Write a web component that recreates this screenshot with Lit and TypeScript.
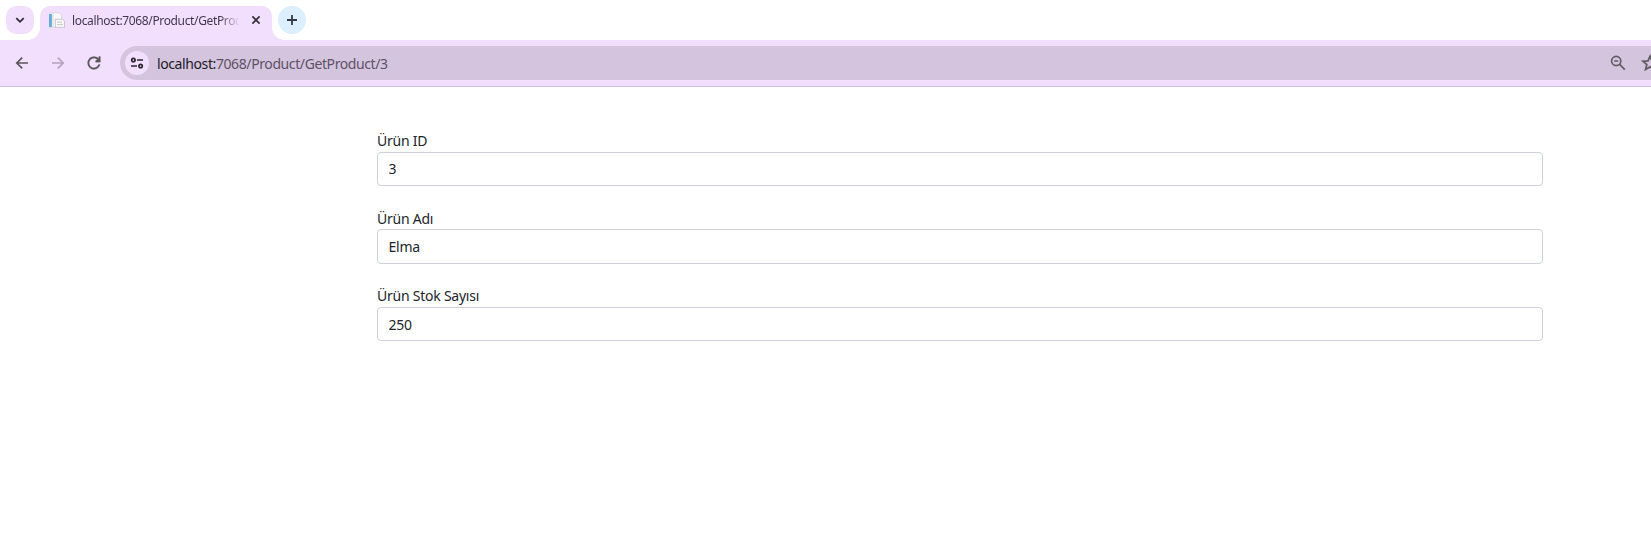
import { LitElement, html, css } from "lit";
import { customElement, property } from "lit/decorators.js";

@customElement("browser-chrome")
class BrowserChrome extends LitElement {
  static styles = css`
    :host { display: block; font-family: "Noto Sans", "Open Sans", sans-serif; }
    svg { display: block; flex: none; }
    .strip { display: flex; height: 40px; box-sizing: border-box; padding: 6px 0 0 6px; background: #fff; }
    .search { width: 28px; height: 28px; border-radius: 10px; background: #f2dffd; display: grid; place-items: center; }
    .tab { position: relative; margin-left: 6px; width: 232px; height: 34px; box-sizing: border-box; padding: 0 10px 6px 9px;
      background: #f2dffd; border-radius: 10px 10px 0 0; display: flex; align-items: center; }
    .tab::before, .tab::after { content: ""; position: absolute; bottom: 0; width: 12px; height: 12px; }
    .tab::before { right: 100%; background: radial-gradient(circle at 0 0, transparent 11.5px, #f2dffd 12px); }
    .tab::after { left: 100%; background: radial-gradient(circle at 100% 0, transparent 11.5px, #f2dffd 12px); }
    .title { margin-left: 7px; width: 168px; overflow: hidden; white-space: nowrap; font-size: 12px; line-height: 18px; padding-top: 2px;
      letter-spacing: -0.36px; color: #44394c; -webkit-mask-image: linear-gradient(90deg, #000 148px, transparent 168px);
      mask-image: linear-gradient(90deg, #000 148px, transparent 168px); }
    .close { margin-left: 11px; }
    .new { margin-left: 6px; width: 28px; height: 28px; border-radius: 50%; background: #dbeffe; display: grid; place-items: center; }
    .toolbar { display: flex; align-items: center; height: 47px; box-sizing: border-box; border-bottom: 1px solid #d0c1da;
      background: #f2dffd; padding: 0 0 0 14px; overflow: hidden; }
    .nav { display: flex; gap: 20px; width: 106px; }
    .bar { flex: 1; min-width: 0; height: 34px; box-sizing: border-box; padding-left: 5px; border-radius: 17px 0 0 17px; background: #d5c4de;
      display: flex; align-items: center; overflow: hidden; }
    .info { width: 24px; height: 24px; border-radius: 50%; background: #f2dffd; display: grid; place-items: center; }
    .url { margin-left: 8px; padding-top: 1px; font-size: 14px; line-height: 20px; letter-spacing: -0.4px; color: #5d5265; white-space: nowrap; }
    .host { color: #201b24; }
    .zoom { margin-left: auto; }
    .star { margin: 0 -8px 0 15px; }
  `;
  render() {
    return html`
      <div class="strip">
        <div class="search"><svg width="12" height="12" viewBox="0 0 12 12" fill="none" stroke="#332b39" stroke-width="1.8"><path d="M2.3 4.2 6 7.8l3.7-3.6"/></svg></div>
        <div class="tab">
          <svg width="16" height="16" viewBox="0 0 16 16"><path fill="#f6f6f7" stroke="#d2d0d5" stroke-width=".7" d="M.4 1h4.2v14.3H.4z"/><path fill="#f8f8f9" stroke="#d2d0d5" stroke-width=".7" d="M4 .8h6.3l2.2 2v12.5H4z"/><path fill="#64add8" d="M0 2h2.9v13H0z"/><path fill="#fafafa" stroke="#bdbdc1" stroke-width=".8" d="M6.4 7.3h7l2.1 1.8v6.3H6.4z"/><path stroke="#c7c7ca" d="M8 10.2h5M8 12.6h6"/></svg>
          <span class="title">localhost:7068/Product/GetProduct/3</span>
          <svg class="close" width="10" height="10" viewBox="0 0 10 10" stroke="#332b39" stroke-width="1.6"><path d="m1.4 1.4 7.2 7.2m0-7.2L1.4 8.6"/></svg>
        </div>
        <div class="new"><svg width="12" height="12" viewBox="0 0 12 12" stroke="#343b42" stroke-width="1.8"><path d="M6 1v10M1 6h10"/></svg></div>
      </div>
      <div class="toolbar">
        <div class="nav">
          <svg width="16" height="16" viewBox="0 0 16 16" fill="none" stroke="#5a565c" stroke-width="1.7"><path d="M14 8H3.2M8.2 2.6 2.8 8l5.4 5.4"/></svg>
          <svg width="16" height="16" viewBox="0 0 16 16" fill="none" stroke="#b3a4bd" stroke-width="1.7"><path d="M2 8h10.8M7.8 2.6 13.2 8l-5.4 5.4"/></svg>
          <svg width="16" height="16" viewBox="2 2 20 20" fill="#5a565c" stroke="#5a565c" stroke-width=".3"><path d="M17.65 6.35C16.2 4.9 14.21 4 12 4c-4.42 0-7.99 3.58-7.99 8s3.57 8 7.99 8c3.73 0 6.84-2.55 7.73-6h-2.08c-.82 2.33-3.04 4-5.65 4-3.31 0-6-2.69-6-6s2.69-6 6-6c1.66 0 3.14.69 4.22 1.78L14 9v2h6V4h-2z"/></svg>
        </div>
        <div class="bar">
          <div class="info"><svg width="14" height="12" viewBox="0 0 14 12" fill="none" stroke="#2c2631" stroke-width="1.7"><circle cx="3.4" cy="3" r="1.7"/><path d="M7 3h6M1 9h6"/><circle cx="10.6" cy="9" r="1.7"/></svg></div>
          <span class="url"><span class="host">localhost:</span>7068/Product/GetProduct/3</span>
          <svg class="zoom" width="16" height="16" viewBox="0 0 16 16" fill="none" stroke="#625d65" stroke-width="1.7"><circle cx="6.2" cy="6" r="4.6"/><path d="m9.4 9.2 5.4 5.4M4.2 6h4"/></svg>
          <svg class="star" width="18" height="18" viewBox="0 0 18 18" fill="none" stroke="#625d65" stroke-width="1.8"><path d="m9 2.3 2 4.6 5 .4-3.8 3.3 1.2 4.9L9 12.9l-4.4 2.6 1.2-4.9L2 7.3l5-.4z"/></svg>
        </div>
      </div>`;
  }
}

@customElement("product-field")
class ProductField extends LitElement {
  @property() label = "";
  @property() value = "";
  static styles = css`
    :host { display: block; font: 14px/22px "Noto Sans", "Open Sans", sans-serif; letter-spacing: -0.24px; color: #212529; }
    .label { display: block; height: 22px; box-sizing: border-box; padding-top: 0.5px; }
    .control { display: block; width: 100%; height: 34.4px; box-sizing: border-box; border: 1px solid #ced1d8; border-radius: 4px;
      padding: 0 10.5px; font: inherit; letter-spacing: inherit; color: inherit; background: #fff; outline: none; }
  `;
  render() {
    return html`<label><span class="label">${this.label}</span><input class="control" readonly .value=${this.value} /></label>`;
  }
}

@customElement("app-root")
class AppRoot extends LitElement {
  static styles = css`
    :host { display: block; height: 538px; overflow: hidden; background: #fff; }
    .form { display: grid; row-gap: 21.2px; padding: 42.8px 108px 0 377px; }
  `;
  fields = [
    { label: "Ürün ID", value: "3" },
    { label: "Ürün Adı", value: "Elma" },
    { label: "Ürün Stok Sayısı", value: "250" },
  ];
  render() {
    return html`<browser-chrome></browser-chrome>
      <main class="form">${this.fields.map((f) => html`<product-field label=${f.label} value=${f.value}></product-field>`)}</main>`;
  }
}
